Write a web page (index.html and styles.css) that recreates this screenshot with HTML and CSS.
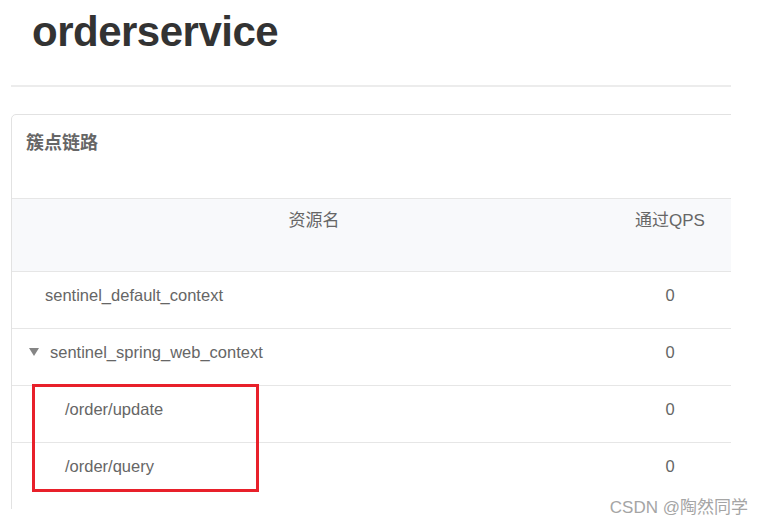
FILE: index.html
```html
<!DOCTYPE html>
<html lang="zh">
<head>
    <meta charset="UTF-8">
    <meta name="viewport" content="width=device-width, initial-scale=1.0">
    <title>orderservice - 簇点链路</title>
    <link rel="stylesheet" href="styles.css">
</head>
<body>

    <div class="page">
        <div class="shot">
            <h1 class="app-title">orderservice</h1>
            <div class="divider"></div>

            <!-- 簇点链路 -->
            <div class="panel">
                <div class="panel-head">簇点链路</div>
                <div class="tree-table">
                    <div class="row head-row">
                        <div class="cell name">资源名</div>
                        <div class="cell num">通过QPS</div>
                        <div class="cell"></div>
                    </div>
                    <div class="row">
                        <div class="cell name lvl0">sentinel_default_context</div>
                        <div class="cell num">0</div>
                        <div class="cell"></div>
                    </div>
                    <div class="row">
                        <div class="cell name open">
                            <svg class="caret" width="10" height="8" viewBox="0 0 10 8"><polygon points="0,0 10,0 5,8" /></svg>
                            sentinel_spring_web_context
                        </div>
                        <div class="cell num">0</div>
                        <div class="cell"></div>
                    </div>
                    <div class="row">
                        <div class="cell name lvl1">/order/update</div>
                        <div class="cell num">0</div>
                        <div class="cell"></div>
                    </div>
                    <div class="row">
                        <div class="cell name lvl1">/order/query</div>
                        <div class="cell num">0</div>
                        <div class="cell"></div>
                    </div>
                </div>
            </div>
        </div>

        <!-- annotation -->
        <div class="mark-box"></div>
        <div class="watermark">CSDN @陶然同学</div>
    </div>

</body>
</html>
```

FILE: styles.css
```css
body {
    font-family: "Liberation Sans", "Noto Sans CJK SC", sans-serif;
    margin: 0;
    padding: 0;
    background-color: #fff;
    color: #666;
}
.page {
    position: relative;
    width: 762px;
    height: 526px;
    overflow: hidden;
}
.shot {
    margin-left: 11px;
    width: 720px;
    height: 509px;
    overflow: hidden;
}
.app-title {
    margin: 8px 0 0;
    padding-left: 21px;
    font-size: 42px;
    line-height: 48px;
    letter-spacing: -0.5px;
    font-weight: bold;
    color: #333;
}
.divider {
    height: 2px;
    background-color: #ececec;
    margin-top: 29px;
}
.panel {
    margin-top: 27px;
    width: 790px;
    padding-bottom: 60px;
    border: 1px solid #e2e2e2;
    border-radius: 5px;
}
.panel-head {
    height: 84px;
    box-sizing: border-box;
    padding: 16px 14px 0;
    font-size: 18px;
    line-height: 24px;
    font-weight: bold;
    color: #666;
    border-bottom: 1px solid #e6e6e6;
}
.row {
    display: grid;
    grid-template-columns: 604px 108px 1fr;
    border-top: 1px solid #e6e6e6;
    font-size: 16.5px;
    line-height: 24px;
}
.head-row {
    border-top: none;
    height: 72px;
    background-color: #f8f9fb;
    font-size: 17px;
}
.head-row .cell {
    padding-top: 10px;
}
.cell {
    padding: 11px 0 21px;
}
.head-row .name {
    text-align: center;
}
.num {
    text-align: center;
}
.lvl0 {
    padding-left: 33px;
}
.open {
    padding-left: 17px;
    display: flex;
    align-items: center;
    gap: 11px;
    height: 24px;
}
.caret {
    fill: #858585;
}
.lvl1 {
    padding-left: 53px;
}
.mark-box {
    position: absolute;
    left: 32px;
    top: 384px;
    width: 221px;
    height: 102px;
    border: 3px solid #e8202a;
}
.watermark {
    position: absolute;
    right: 14px;
    top: 497px;
    font-size: 17px;
    line-height: 22px;
    color: #a5a5a5;
}
```
